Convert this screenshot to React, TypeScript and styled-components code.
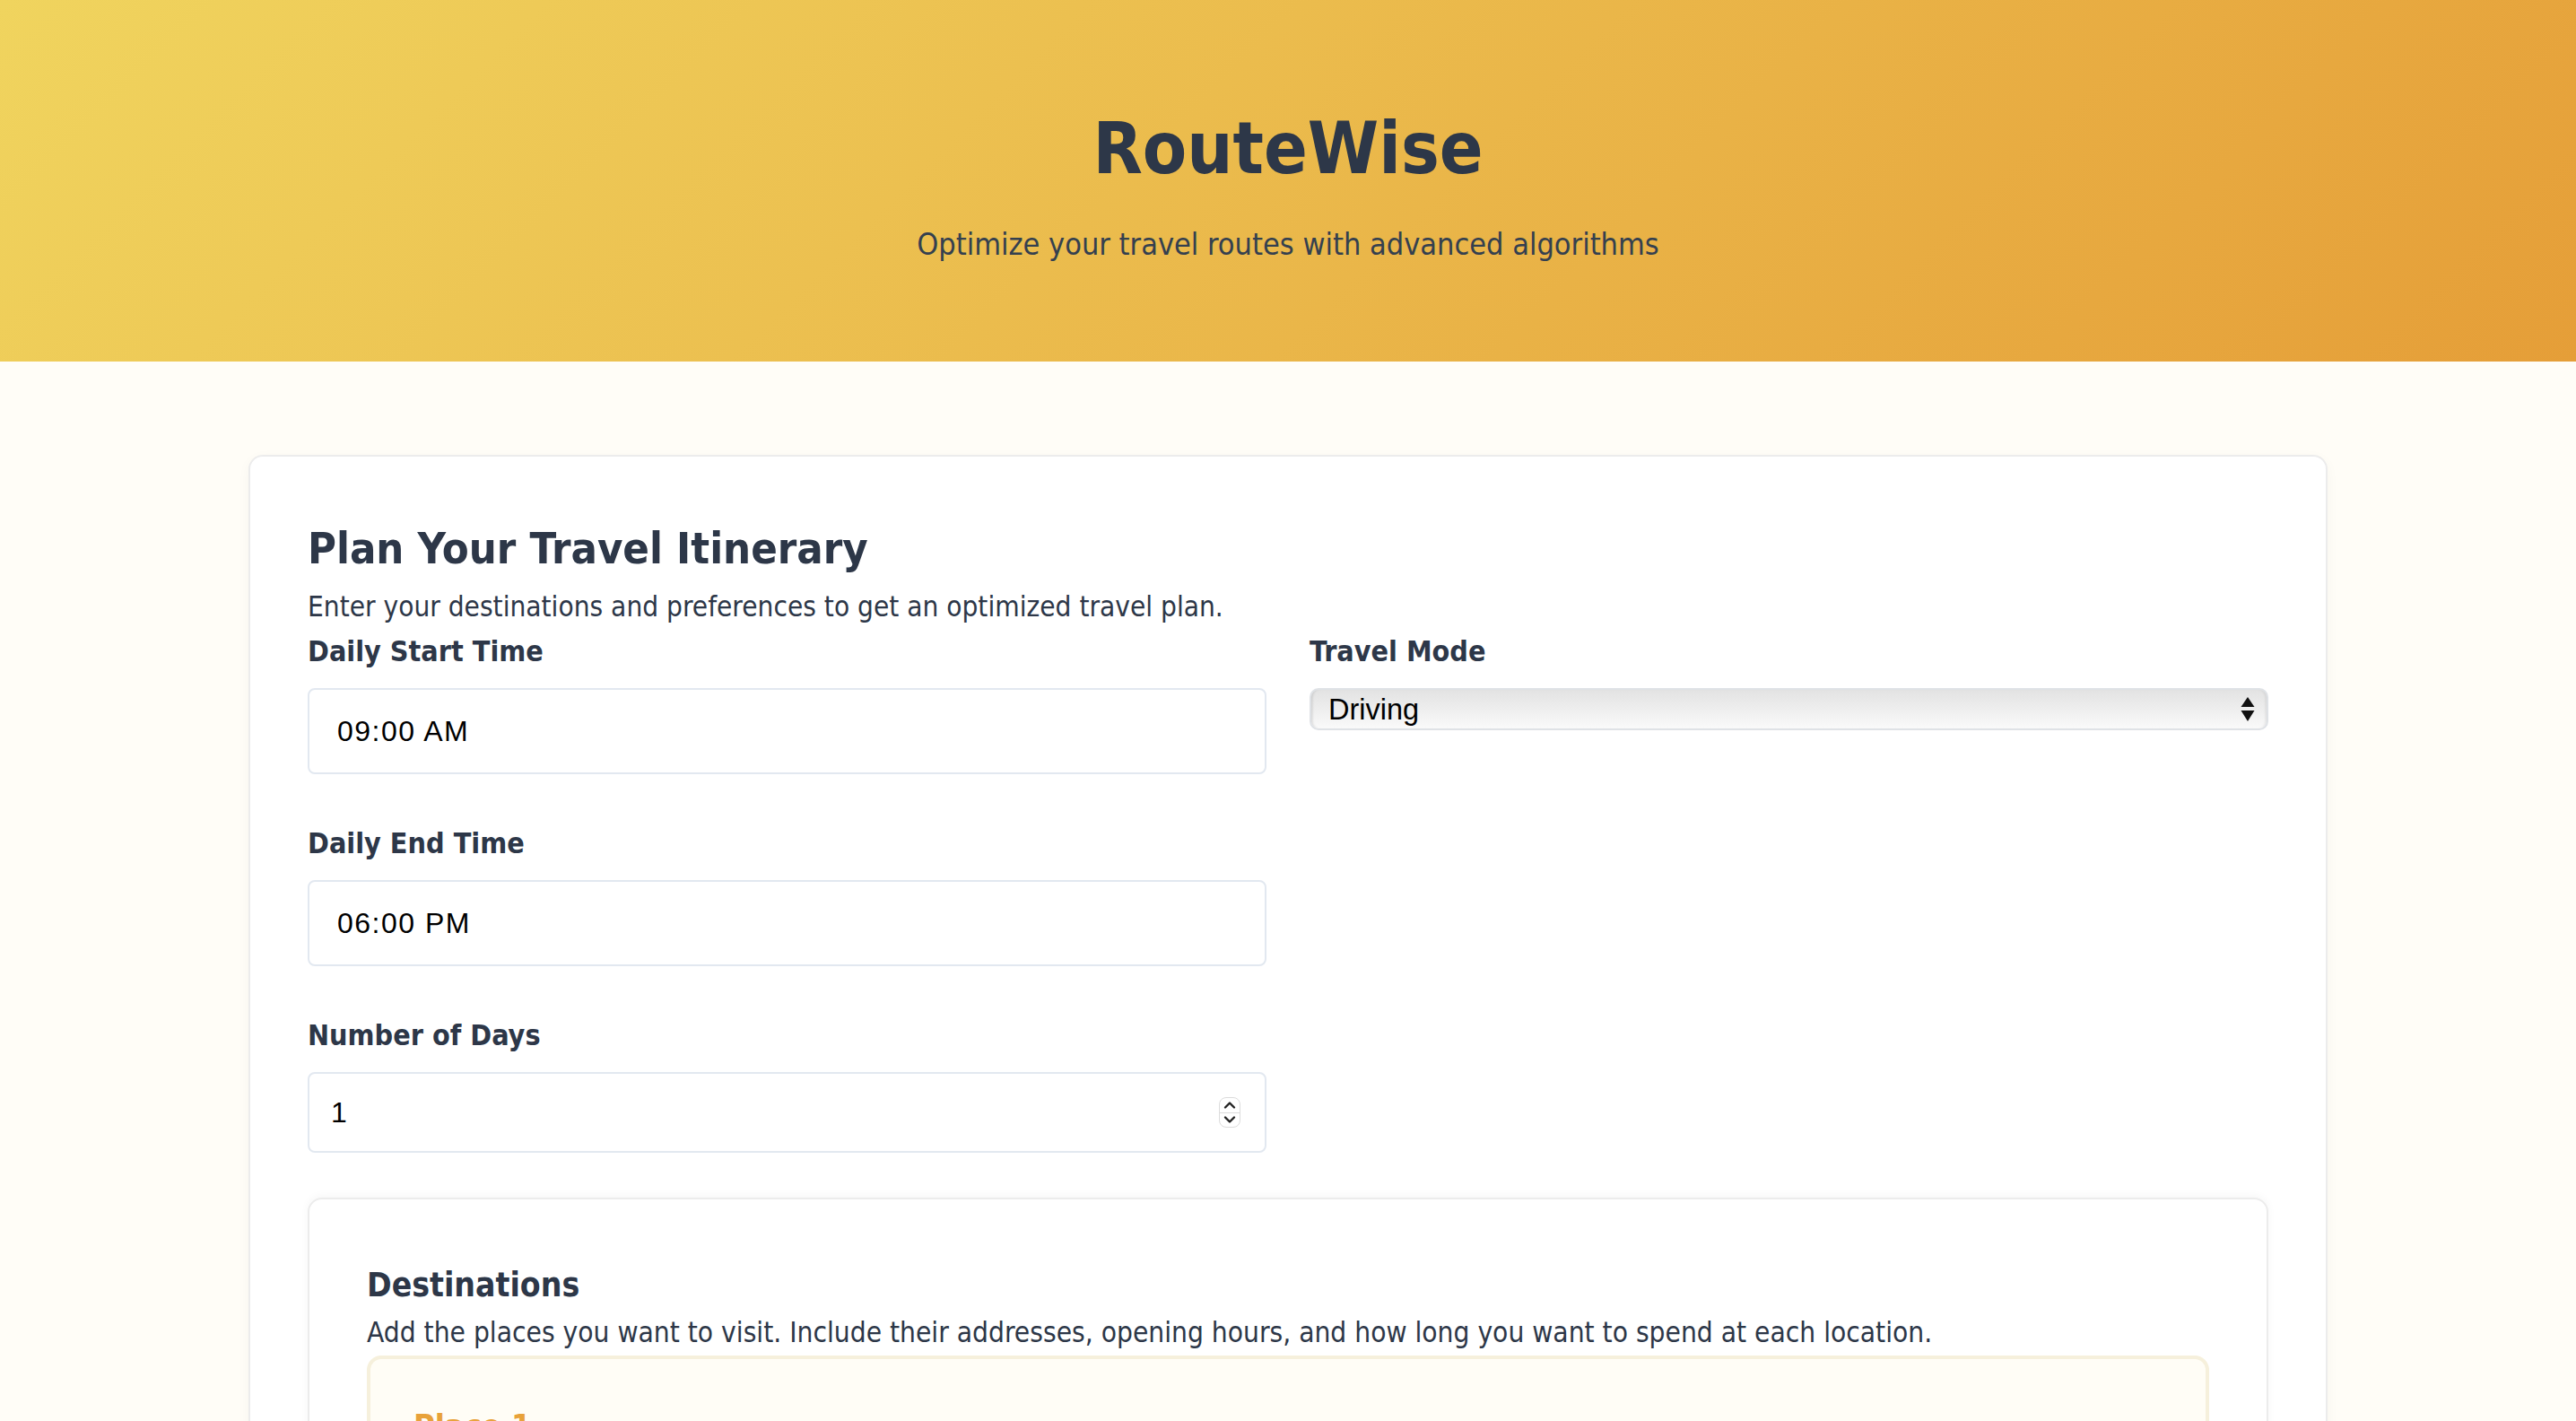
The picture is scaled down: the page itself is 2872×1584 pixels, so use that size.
import React, { useState } from 'react';
import styled, { createGlobalStyle } from 'styled-components';

const ink = '#2d3748';
const line = '#e2e8f0';
const amber = '#e8a23a';

const GlobalStyle = createGlobalStyle`
  * {
    box-sizing: border-box;
  }

  body {
    margin: 0;
    background: #fffdf7;
    color: ${ink};
    font-family: "DejaVu Sans Condensed", "DejaVu Sans", Verdana, sans-serif;
  }
`;

const TravelPlanner = () => {
  const [startTime, setStartTime] = useState('09:00 AM');
  const [endTime, setEndTime] = useState('06:00 PM');
  const [days, setDays] = useState('1');
  const [mode, setMode] = useState('driving');

  return (
    <>
      <GlobalStyle />
      <Hero>
        <HeroTitle>RouteWise</HeroTitle>
        <HeroSubtitle>Optimize your travel routes with advanced algorithms</HeroSubtitle>
      </Hero>

      <Main>
        <Card>
          <CardTitle>Plan Your Travel Itinerary</CardTitle>
          <CardText>Enter your destinations and preferences to get an optimized travel plan.</CardText>

          <FormGrid>
            <FieldColumn>
              <Field>
                <Label htmlFor="start">Daily Start Time</Label>
                <TextInput id="start" $time value={startTime} onChange={e => setStartTime(e.target.value)} />
              </Field>
              <Field>
                <Label htmlFor="end">Daily End Time</Label>
                <TextInput id="end" $time value={endTime} onChange={e => setEndTime(e.target.value)} />
              </Field>
              <Field>
                <Label htmlFor="days">Number of Days</Label>
                <NumberShell>
                  <BareInput id="days" value={days} onChange={e => setDays(e.target.value)} />
                  <Stepper>
                    <StepButton>
                      <svg width="14" height="10" viewBox="0 0 14 10">
                        <path d="M2 7.5 L7 2.5 L12 7.5" fill="none" stroke="#222" strokeWidth="2.4" strokeLinecap="round" strokeLinejoin="round" />
                      </svg>
                    </StepButton>
                    <StepButton>
                      <svg width="14" height="10" viewBox="0 0 14 10">
                        <path d="M2 2.5 L7 7.5 L12 2.5" fill="none" stroke="#222" strokeWidth="2.4" strokeLinecap="round" strokeLinejoin="round" />
                      </svg>
                    </StepButton>
                  </Stepper>
                </NumberShell>
              </Field>
            </FieldColumn>

            <FieldColumn>
              <Field>
                <Label htmlFor="mode">Travel Mode</Label>
                <SelectShell>
                  <BareSelect id="mode" value={mode} onChange={e => setMode(e.target.value)}>
                    <option value="driving">Driving</option>
                    <option value="walking">Walking</option>
                    <option value="transit">Transit</option>
                    <option value="cycling">Cycling</option>
                  </BareSelect>
                  <svg width="16" height="28" viewBox="0 0 16 28">
                    <path d="M8 0 L15.5 11 L0.5 11 Z" fill="#111" />
                    <path d="M0.5 15 L15.5 15 L8 27 Z" fill="#111" />
                  </svg>
                </SelectShell>
              </Field>
            </FieldColumn>
          </FormGrid>

          <Destinations>
            <SectionTitle>Destinations</SectionTitle>
            <SectionText>
              Add the places you want to visit. Include their addresses, opening hours, and how long you want to spend at each location.
            </SectionText>
            <PlaceCard>
              <PlaceTitle>Place 1</PlaceTitle>
              <Field>
                <Label htmlFor="place-name">Place Name</Label>
                <TextInput id="place-name" placeholder="e.g. Eiffel Tower" />
              </Field>
            </PlaceCard>
          </Destinations>
        </Card>
      </Main>
    </>
  );
};

const Hero = styled.header`
  background: linear-gradient(135deg, #f0d45e 0%, #e59e38 100%);
  padding: 119px 32px 110px;
  text-align: center;
`;

const HeroTitle = styled.h1`
  margin: 0 0 38px;
  font-size: 80px;
  line-height: 94px;
  font-weight: 700;
  color: ${ink};
`;

const HeroSubtitle = styled.p`
  margin: 0;
  font-size: 34px;
  line-height: 42px;
  color: #34404f;
`;

const Main = styled.main`
  max-width: 2398px;
  margin: 0 auto;
  padding: 104px 40px 80px;
`;

const Card = styled.section`
  background: #ffffff;
  border: 2px solid #ececec;
  border-radius: 16px;
  box-shadow: 0 4px 14px rgba(0, 0, 0, 0.04);
  padding: 74px 64px 64px;
`;

const CardTitle = styled.h2`
  margin: 0 0 16px;
  font-size: 48.5px;
  line-height: 56px;
  font-weight: 700;
  color: ${ink};
`;

const CardText = styled.p`
  margin: 0 0 10px;
  font-size: 31.3px;
  line-height: 42px;
  color: ${ink};
`;

const FormGrid = styled.div`
  display: grid;
  grid-template-columns: repeat(2, minmax(0, 1fr));
  column-gap: 48px;
  align-items: start;
`;

const FieldColumn = styled.div`
  display: flex;
  flex-direction: column;
  gap: 58px;
`;

const Field = styled.div`
  display: flex;
  flex-direction: column;
`;

const Label = styled.label`
  font-size: 32px;
  line-height: 38px;
  font-weight: 700;
  color: ${ink};
  margin-bottom: 22px;
`;

const TextInput = styled.input<{ $time?: boolean }>`
  height: 96px;
  padding: 0 24px 0 ${p => (p.$time ? '31px' : '24px')};
  border: 2px solid ${line};
  border-radius: 8px;
  background: #ffffff;
  font-family: "Liberation Sans", Arial, sans-serif;
  font-size: 32px;
  letter-spacing: ${p => (p.$time ? '1.5px' : 'normal')};
  color: #000000;
  outline: none;
`;

const NumberShell = styled.div`
  display: flex;
  align-items: center;
  height: 90px;
  padding: 0 27px 0 24px;
  border: 2px solid ${line};
  border-radius: 8px;
  background: #ffffff;
`;

const BareInput = styled.input`
  flex: 1;
  min-width: 0;
  border: none;
  padding: 0;
  background: transparent;
  font-family: "Liberation Sans", Arial, sans-serif;
  font-size: 32px;
  color: #000000;
  outline: none;
`;

const Stepper = styled.div`
  display: flex;
  flex-direction: column;
  width: 24px;
  height: 34px;
  border: 1px solid #dcdcdc;
  border-radius: 8px;
  overflow: hidden;
  background: #ffffff;
`;

const StepButton = styled.span`
  flex: 1;
  display: flex;
  align-items: center;
  justify-content: center;

  & + & {
    border-top: 1px solid #dcdcdc;
  }
`;

const SelectShell = styled.div`
  display: flex;
  align-items: center;
  height: 47px;
  padding: 0 13px 0 19px;
  border: 2px solid #dfe2e6;
  border-radius: 10px;
  background: linear-gradient(to bottom, #e3e3e3 0%, #efefef 55%, #fafafa 100%);
  box-shadow: inset 3px 0 3px -2px rgba(0, 0, 0, 0.15), inset -3px 0 3px -2px rgba(0, 0, 0, 0.1);
`;

const BareSelect = styled.select`
  flex: 1;
  min-width: 0;
  appearance: none;
  border: none;
  padding: 0;
  background: transparent;
  font-family: "Liberation Sans", Arial, sans-serif;
  font-size: 32.5px;
  color: #000000;
  outline: none;
`;

const Destinations = styled.section`
  margin-top: 50px;
  background: #ffffff;
  border: 2px solid #ececec;
  border-radius: 16px;
  box-shadow: 0 -2px 10px rgba(0, 0, 0, 0.04);
  padding: 74px 64px 64px;
`;

const SectionTitle = styled.h3`
  margin: 0 0 6px;
  font-size: 37px;
  line-height: 43px;
  font-weight: 700;
  color: ${ink};
`;

const SectionText = styled.p`
  margin: 10px 0 5px;
  font-size: 31.4px;
  line-height: 42px;
  color: ${ink};
`;

const PlaceCard = styled.div`
  background: #fffdf6;
  border: 4px solid #f6f0dc;
  border-radius: 16px;
  padding: 48px;
`;

const PlaceTitle = styled.h4`
  margin: 6px 0 32px;
  font-size: 36px;
  line-height: normal;
  font-weight: 700;
  color: ${amber};
`;

export default TravelPlanner;
